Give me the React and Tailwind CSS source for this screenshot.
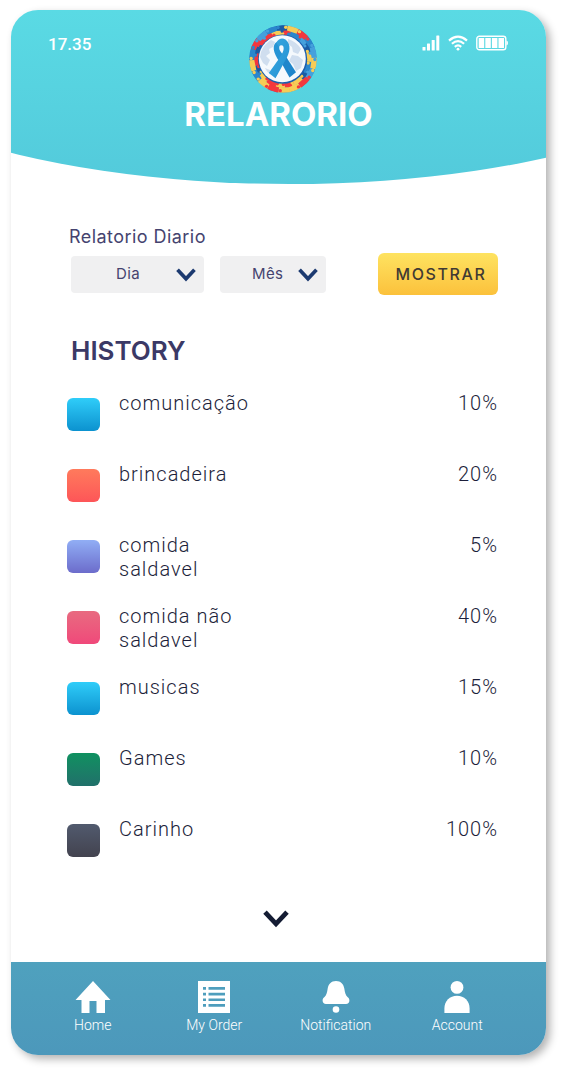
import React from "react";

const BLUE = "#2a86cc";
const NAVY = "#1a5ba4";
const SKY = "#45a0dc";
const RED = "#f4373d";
const GOLD = "#f7cc55";

const OUTER = [NAVY, GOLD, RED, BLUE, SKY, GOLD, SKY, RED, GOLD, GOLD, RED, GOLD, BLUE, GOLD, BLUE, RED, SKY, BLUE];
const INNER = [RED, BLUE, SKY, NAVY, GOLD, BLUE, NAVY, GOLD, RED, GOLD, RED, GOLD, NAVY, RED, NAVY, RED, RED, GOLD];

const polar = (r, a) => {
  const t = (a * Math.PI) / 180;
  return [34 + r * Math.sin(t), 34 - r * Math.cos(t)];
};

const wedge = (r1, r2, a1, a2) => {
  const p = [polar(r1, a1), polar(r2, a1), polar(r2 + 0.4, (a1 + a2) / 2), polar(r2, a2), polar(r1, a2)];
  return "M" + p.map((q) => q.join(" ")).join("L") + "Z";
};

function PuzzleRing({ colors, r1, r2, shift, outward }) {
  const step = 360 / colors.length;
  const mid = (r1 + r2) / 2;
  return (
    <g>
      {colors.map((c, i) => (
        <path key={i} d={wedge(r1, r2, i * step + shift, (i + 1) * step + shift + 0.5)} fill={c} />
      ))}
      {colors.map((c, i) => {
        const forward = i % 3 !== 0;
        const [kx, ky] = polar(mid, (i + 1) * step + shift + (forward ? 3 : -3));
        const [tx, ty] = polar(outward ? r2 + 0.9 : r1 - 0.9, (i + 0.5) * step + shift);
        return (
          <g key={i}>
            <circle cx={kx} cy={ky} r="1.7" fill={forward ? c : colors[(i + 1) % colors.length]} />
            {i % 2 === 0 && <circle cx={tx} cy={ty} r="1.6" fill={c} />}
          </g>
        );
      })}
    </g>
  );
}

function Logo() {
  return (
    <svg viewBox="0 0 68 68" className="size-[68px]" role="img" aria-label="Logo">
      <defs>
        <clipPath id="ring"><circle cx="34" cy="34" r="33.8" /></clipPath>
        <linearGradient id="ribbon" x1="0" y1="0" x2="1" y2="1">
          <stop offset="0" stopColor="#39a8e0" />
          <stop offset="1" stopColor="#2391d3" />
        </linearGradient>
      </defs>
      <g clipPath="url(#ring)">
        <circle cx="34" cy="34" r="34" fill={BLUE} />
        <PuzzleRing colors={INNER} r1={22} r2={28.8} shift={-4} outward />
        <PuzzleRing colors={OUTER} r1={28.8} r2={35} shift={-12} />
      </g>
      <circle cx="33.6" cy="34.2" r="24.6" fill="#1c5fae" />
      <circle cx="33.3" cy="33.8" r="23.5" fill="#f5f9fd" />
      <path d="M12 27q3-8 10-12l4 2-2 5-4 2 1 4-4 3 4 4-3 6-4-3-3-6ZM39 14q9 3 13 10l-3 5-5-2-1-5-4-3ZM43 30l6 1 5 4-2 8-5 3-3-7-4-3ZM16 43l5 2 2 5q-5-2-7-7Z" fill="#d0deef" />
      <path d="M30.500 34.500 36 30 47 47.200 40.500 52.500Z" fill="#1f86cb" />
      <path d="M28 17C23 19 23.500 28 31 37L35.500 30.500C31.500 27.500 29.500 24.500 30.500 20.800Z" fill="#2694d5" />
      <path d="M27.200 17.600Q31.500 11 36.800 14.800C42.500 19.500 41 28 36.500 35L26.500 53.200 19.800 48 30.500 33C34.500 27 35.500 23.800 34 20.800Q32 19.200 29.800 21.500Z" fill="url(#ribbon)" />
    </svg>
  );
}

function StatusIcons() {
  return (
    <div className="flex items-center gap-2 text-white">
      <svg viewBox="0 0 18 16" className="h-4 w-[18px]" fill="currentColor" aria-label="Signal">
        <rect x=".5" y="12" width="3" height="3.500" rx=".5" />
        <rect x="5" y="8.500" width="3" height="7" rx=".5" />
        <rect x="9.700" y="5" width="3" height="10.500" rx=".5" />
        <rect x="14.300" y=".5" width="3" height="15" rx=".5" />
      </svg>
      <svg viewBox="0 0 20 16" className="h-4 w-5" fill="none" stroke="currentColor" strokeWidth="2.200" aria-label="Wi-Fi">
        <path d="M1 5.600Q10-2.200 19 5.600M3.900 8.800Q10 3.400 16.100 8.800M6.800 11.800Q10 9 13.200 11.800" />
        <circle cx="10" cy="14.200" r="1.400" fill="currentColor" stroke="none" />
      </svg>
      <svg viewBox="0 0 32 16" className="h-4 w-8" fill="currentColor" aria-label="Battery">
        <rect x=".8" y="1.200" width="29" height="13.600" rx="2.600" fill="none" stroke="currentColor" strokeWidth="1.400" />
        <path d="M30.400 5.500q1.600.3 1.600 2.500t-1.600 2.500Z" />
        <rect x="2.700" y="3" width="5.500" height="10" />
        <rect x="9.300" y="3" width="5.500" height="10" />
        <rect x="15.900" y="3" width="5.500" height="10" />
        <rect x="22.500" y="3" width="5.500" height="10" />
      </svg>
    </div>
  );
}

function Chevron({ className }) {
  return (
    <svg viewBox="0 0 26 18" className={className} fill="none" stroke="currentColor" strokeWidth="4.800" aria-hidden="true">
      <path d="M2 2.200 13 13.800 24 2.200" />
    </svg>
  );
}

function Picker({ label, className, selectClass }) {
  return (
    <div className={`relative ${className}`}>
      <select
        aria-label={label}
        className={`h-[37px] w-full appearance-none rounded-sm bg-[#f0f0f1] text-[15px] tracking-wide text-[#45436f] ${selectClass}`}
      >
        <option>{label}</option>
      </select>
      <Chevron className="pointer-events-none absolute top-3 right-2 h-[14px] w-5 text-[#1c3a70]" />
    </div>
  );
}

const history = [
  { name: "comunicação", value: "10%", swatch: "from-[#2fcdf9] to-[#0b92cf]" },
  { name: "brincadeira", value: "20%", swatch: "from-[#ff7a5c] to-[#fd5558]" },
  { name: "comida saldavel", value: "5%", swatch: "from-[#91aef5] to-[#6c6ccb]" },
  { name: "comida não saldavel", value: "40%", swatch: "from-[#e86a80] to-[#f0487a]" },
  { name: "musicas", value: "15%", swatch: "from-[#2fcdf9] to-[#0b92cf]" },
  { name: "Games", value: "10%", swatch: "from-[#0e9160] to-[#20706a]" },
  { name: "Carinho", value: "100%", swatch: "from-[#515a6e] to-[#43434f]" },
];

const tabs = [
  {
    name: "Home",
    icon: <path d="M18 0 35.500 19H30v13h-8.500V20h-7v12H6.500V19H.5Z" />,
  },
  {
    name: "My Order",
    icon: (
      <path
        fillRule="evenodd"
        d="M2 0h32v32H2ZM7 6v2.700h3V6ZM12.500 6v2.700h16.500V6ZM7 11.700v2.700h3v-2.700ZM12.500 11.700v2.700h16.500v-2.700ZM7 17.400v2.700h3v-2.700ZM12.500 17.400v2.700h16.500v-2.700ZM7 23.100v2.700h3v-2.700ZM12.500 23.100v2.700h16.500v-2.700Z"
      />
    ),
  },
  {
    name: "Notification",
    icon: (
      <>
        <path d="M18 0c5 0 7.600 3.400 8.300 7.500.6 4 1.200 6.500 3.200 8.500 1.300 1 1.900 2.100 1.900 3.600 0 2-1.300 3.400-3.400 3.400H8c-2.100 0-3.400-1.400-3.400-3.400 0-1.500.6-2.600 1.900-3.600 2-2 2.600-4.500 3.200-8.500C10.400 3.400 13 0 18 0Z" />
        <circle cx="18" cy="28.500" r="3.300" />
      </>
    ),
  },
  {
    name: "Account",
    icon: (
      <>
        <circle cx="18" cy="6.400" r="6.400" />
        <path d="M5.400 32v-4.500C5.400 20 10.800 14.800 18 14.800S30.600 20 30.600 27.500V32Z" />
      </>
    ),
  },
];

export default function App() {
  return (
    <div className="bg-white pt-2.5 pr-5 pb-5 pl-[11px] font-[Roboto,sans-serif]">
      <div className="overflow-hidden rounded-[27px] bg-white shadow-[4px_4px_9px_rgba(0,0,0,0.3)]">
        <header className="bg-linear-to-b from-[#5adae4] to-[#53cadb] pt-[15px] pb-[50px] [clip-path:ellipse(91%_100%_at_52%_0)]">
          <div className="grid grid-cols-[1fr_68px_1fr] items-start pr-7 pl-[37px] text-white">
            <time className="mt-[7px] text-[17px] leading-6 font-medium">17.35</time>
            <Logo />
            <div className="mt-2.5 mr-2.5 justify-self-end">
              <StatusIcons />
            </div>
          </div>
          <h1 className="mt-px text-center font-[Inter,sans-serif] text-[33px] leading-10 font-bold text-white">RELARORIO</h1>
        </header>

        <main className="pt-[41px] pr-12 pb-[34px] pl-14">
          <h2 className="ml-0.5 font-[Inter,sans-serif] text-lg leading-6 tracking-wide text-[#45436f]">Relatorio Diario</h2>
          <form className="mt-1 ml-1 flex items-center font-[Inter,sans-serif]" onSubmit={(e) => e.preventDefault()}>
            <Picker label="Dia" className="w-[133px]" selectClass="pl-[45px]" />
            <Picker label="Mês" className="ml-4 w-[106px]" selectClass="pl-8" />
            <button className="ml-auto h-[42px] w-[120px] rounded-md bg-linear-to-b from-[#fee360] to-[#fbc13b] pl-1.5 text-base font-medium tracking-widest text-[#413a33]">
              MOSTRAR
            </button>
          </form>

          <h2 className="mt-10 ml-1 font-[Inter,sans-serif] text-[26px] leading-8 font-semibold text-[#3b3966]">HISTORY</h2>
          <ul className="mt-6 text-xl leading-6 font-light tracking-wider text-[#1c1e3a]">
            {history.map((item) => (
              <li key={item.name} className="flex min-h-[71px] items-start">
                <span className={`mt-[7px] size-[33px] shrink-0 rounded-md bg-linear-to-b ${item.swatch}`} />
                <span className="ml-[19px] max-w-36">{item.name}</span>
                <span className="ml-auto">{item.value}</span>
              </li>
            ))}
          </ul>
          <div className="mt-[22px] flex justify-center pr-3.5">
            <button aria-label="Ver mais" className="text-[#141c33]">
              <Chevron className="h-[18px] w-[26px]" />
            </button>
          </div>
        </main>

        <nav className="grid grid-cols-4 bg-linear-to-b from-[#4fa1be] to-[#4c98bb] pt-[19px] pr-7 pb-[18px] pl-[21px]">
          {tabs.map((tab) => (
            <a key={tab.name} href="#" className="flex flex-col items-center text-sm leading-6 font-light text-white">
              <svg viewBox="0 0 36 32" className="h-8 w-9" fill="currentColor" aria-hidden="true">{tab.icon}</svg>
              {tab.name}
            </a>
          ))}
        </nav>
      </div>
    </div>
  );
}
